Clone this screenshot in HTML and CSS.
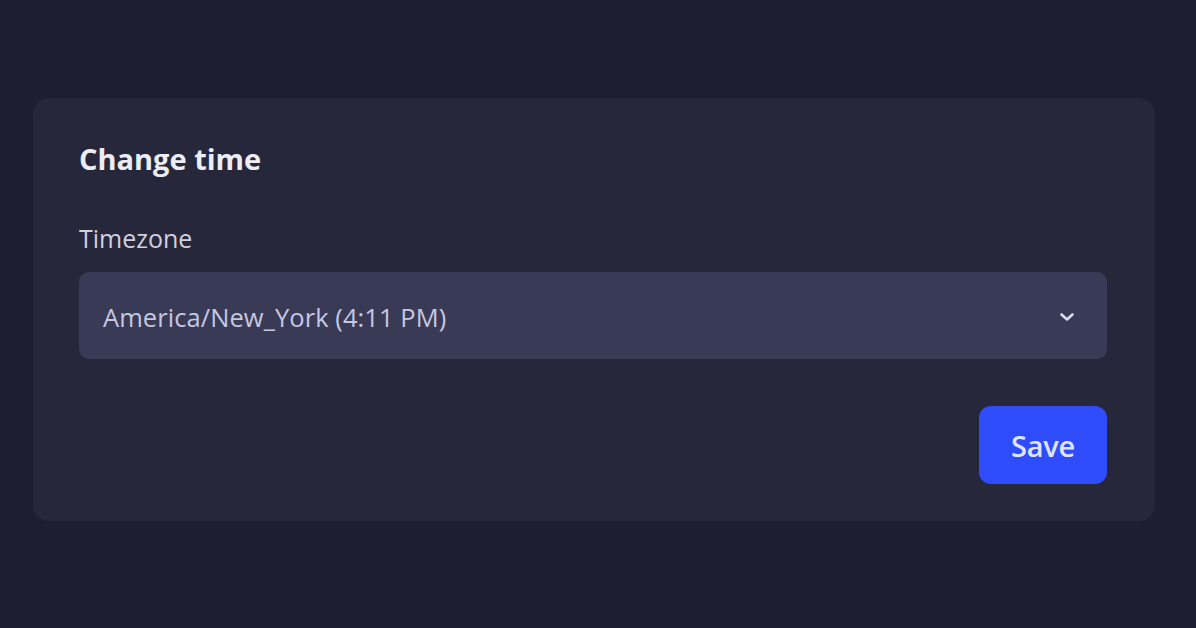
FILE: index.html
```html
<!DOCTYPE html>
<html lang="en">
<head>
<meta charset="utf-8">
<title>Change time</title>
<link rel="stylesheet" href="styles.css">
</head>
<body>
<main class="page">
  <section class="card">
    <h2 class="title">Change time</h2>
    <label class="label" for="tz">Timezone</label>
    <div class="select" id="tz">
      <span class="select-value">America/New_York (4:11 PM)</span>
      <svg class="chevron" width="16" height="10" viewBox="0 0 16 10" aria-hidden="true">
        <path d="M2.5 2.5 L8 7.5 L13.5 2.5" fill="none" stroke="#d9dbee" stroke-width="2.6" stroke-linecap="round" stroke-linejoin="round"/>
      </svg>
    </div>
    <div class="actions">
      <button class="btn" type="button">Save</button>
    </div>
  </section>
</main>
</body>
</html>
```

FILE: styles.css
```css
html, body {
  margin: 0;
  height: 100%;
  background: #1e1e31;
}
body {
  font-family: "Open Sans", "Noto Sans", sans-serif;
  color: #e6e6ef;
}
.page {
  padding: 98px 41px 0 33px;
}
.card {
  background: #27273c;
  border-radius: 16px;
  padding: 42px 48px 37px 46px;
}
.title {
  margin: 0;
  font-size: 29px;
  line-height: 38px;
  font-weight: 700;
  color: #ececf3;
  letter-spacing: 0;
}
.label {
  display: block;
  margin-top: 45px;
  font-size: 25px;
  line-height: 30px;
  color: #d0d0dc;
  letter-spacing: 0;
}
.select {
  margin-top: 19px;
  height: 87px;
  box-sizing: border-box;
  background: #393a56;
  border-radius: 10px;
  display: flex;
  align-items: center;
  justify-content: space-between;
  padding: 2px 32px 0 24px;
}
.select-value {
  font-size: 25.5px;
  color: #c6c7e0;
  letter-spacing: 0.07px;
}
.chevron {
  display: block;
}
.actions {
  display: flex;
  justify-content: flex-end;
  margin-top: 47px;
}
.btn {
  width: 128px;
  height: 78px;
  border: 0;
  border-radius: 12px;
  background: #2f4cfb;
  color: #dfe4ff;
  font-family: inherit;
  font-size: 29px;
  font-weight: 600;
  letter-spacing: -0.3px;
}
```
